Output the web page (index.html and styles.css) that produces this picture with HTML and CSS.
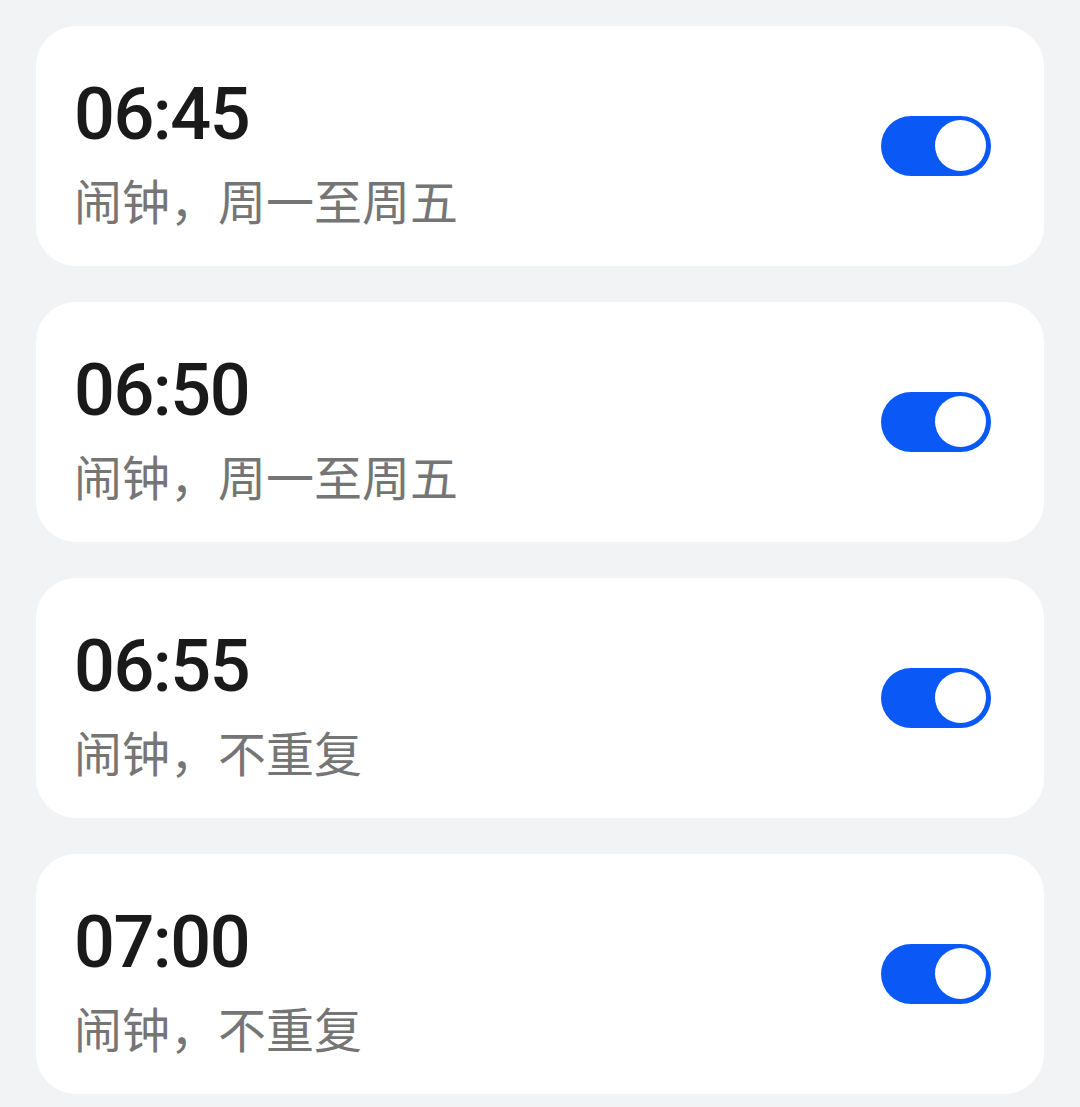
FILE: index.html
```html
<!DOCTYPE html>
<html lang="zh-CN">
<head>
    <meta charset="UTF-8">
    <meta name="viewport" content="width=device-width, initial-scale=1.0">
    <title>闹钟</title>
    <link rel="stylesheet" href="styles.css">
</head>
<body>

    <div class="alarm-list">

        <div class="alarm-card">
            <div class="alarm-info">
                <div class="alarm-time">06:45</div>
                <div class="alarm-desc">闹钟，周一至周五</div>
            </div>
            <div class="switch on"><span class="knob"></span></div>
        </div>

        <div class="alarm-card">
            <div class="alarm-info">
                <div class="alarm-time">06:50</div>
                <div class="alarm-desc">闹钟，周一至周五</div>
            </div>
            <div class="switch on"><span class="knob"></span></div>
        </div>

        <div class="alarm-card">
            <div class="alarm-info">
                <div class="alarm-time">06:55</div>
                <div class="alarm-desc">闹钟，不重复</div>
            </div>
            <div class="switch on"><span class="knob"></span></div>
        </div>

        <div class="alarm-card">
            <div class="alarm-info">
                <div class="alarm-time">07:00</div>
                <div class="alarm-desc">闹钟，不重复</div>
            </div>
            <div class="switch on"><span class="knob"></span></div>
        </div>

    </div>

</body>
</html>
```

FILE: styles.css
```css
body {
    margin: 0;
    background: #f1f3f5;
    font-family: Roboto, "Noto Sans CJK SC", sans-serif;
}

.alarm-list {
    display: flex;
    flex-direction: column;
    gap: 36px;
    padding: 26px 36px;
}

.alarm-card {
    display: flex;
    align-items: center;
    justify-content: space-between;
    background: #ffffff;
    border-radius: 40px;
    padding: 47px 53px 43px 38px;
}

.alarm-time {
    font-family: Roboto, sans-serif;
    font-size: 72px;
    font-weight: 500;
    line-height: 84px;
    letter-spacing: -1.5px;
    color: #1a1a1a;
}

.alarm-desc {
    font-family: "Noto Sans CJK SC", sans-serif;
    font-size: 48px;
    font-weight: 400;
    line-height: 48px;
    margin-top: 18px;
    color: #757575;
}

.switch {
    width: 110px;
    height: 60px;
    border-radius: 30px;
    background: #0a59f7;
    display: flex;
    align-items: center;
    justify-content: flex-end;
    padding: 0 5px;
    box-sizing: border-box;
    margin-top: -5px;
}

.knob {
    width: 51px;
    height: 51px;
    border-radius: 50%;
    background: #ffffff;
}
```
